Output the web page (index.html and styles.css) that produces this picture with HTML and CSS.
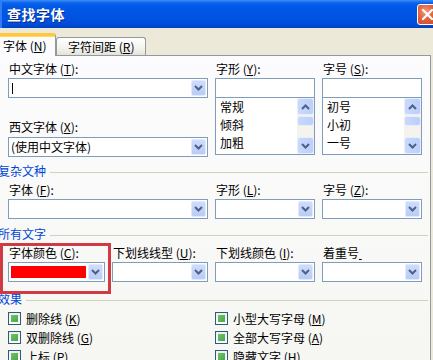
FILE: index.html
```html
<!DOCTYPE html>
<html lang="zh-CN">
<head>
    <meta charset="UTF-8">
    <title>查找字体</title>
    <link rel="stylesheet" href="styles.css">
</head>
<body>
    <div class="dialog">
        <div class="titlebar">
            <span class="title">查找字体</span>
            <span class="close-button">
                <svg width="13" height="13" viewBox="0 0 13 13"><path d="M2 2 L11 11 M11 2 L2 11" stroke="#fff" stroke-width="2.2" stroke-linecap="round"/></svg>
            </span>
        </div>

        <div class="tabbar">
            <div class="tab tab-active">字体 (<u>N</u>)</div>
            <div class="tab">字符间距 (<u>R</u>)</div>
        </div>

        <div class="panel">
            <div class="top-grid">
                <div class="col">
                    <div class="label">中文字体 (<u>T</u>):</div>
                    <div class="combo"><span class="combo-text"><span class="caret"></span></span><span class="drop-button"><svg width="9" height="6" viewBox="0 0 9 6"><polyline points="1,1 4.5,4.5 8,1" fill="none" stroke="#4d6185" stroke-width="2"/></svg></span></div>
                    <div class="label label-spaced">西文字体 (<u>X</u>):</div>
                    <div class="combo"><span class="combo-text">(使用中文字体)</span><span class="drop-button"><svg width="9" height="6" viewBox="0 0 9 6"><polyline points="1,1 4.5,4.5 8,1" fill="none" stroke="#4d6185" stroke-width="2"/></svg></span></div>
                </div>
                <div class="col">
                    <div class="label">字形 (<u>Y</u>):</div>
                    <div class="text-input"></div>
                    <div class="listbox">
                        <div class="list-items">
                            <div>常规</div>
                            <div>倾斜</div>
                            <div>加粗</div>
                        </div>
                        <div class="scrollbar">
                            <span class="scroll-button"><svg width="9" height="6" viewBox="0 0 9 6"><polyline points="1,5 4.5,1.5 8,5" fill="none" stroke="#4d6185" stroke-width="2"/></svg></span>
                            <span class="scroll-track"><span class="scroll-thumb"></span></span>
                            <span class="scroll-button"><svg width="9" height="6" viewBox="0 0 9 6"><polyline points="1,1 4.5,4.5 8,1" fill="none" stroke="#4d6185" stroke-width="2"/></svg></span>
                        </div>
                    </div>
                </div>
                <div class="col">
                    <div class="label">字号 (<u>S</u>):</div>
                    <div class="text-input"></div>
                    <div class="listbox">
                        <div class="list-items">
                            <div>初号</div>
                            <div>小初</div>
                            <div>一号</div>
                        </div>
                        <div class="scrollbar">
                            <span class="scroll-button"><svg width="9" height="6" viewBox="0 0 9 6"><polyline points="1,5 4.5,1.5 8,5" fill="none" stroke="#4d6185" stroke-width="2"/></svg></span>
                            <span class="scroll-track"><span class="scroll-thumb"></span></span>
                            <span class="scroll-button"><svg width="9" height="6" viewBox="0 0 9 6"><polyline points="1,1 4.5,4.5 8,1" fill="none" stroke="#4d6185" stroke-width="2"/></svg></span>
                        </div>
                    </div>
                </div>
            </div>

            <div class="group-header group-complex"><span>复杂文种</span><span class="group-line"></span></div>
            <div class="field-grid">
                <div class="field field-wide">
                    <div class="label">字体 (<u>F</u>):</div>
                    <div class="combo"><span class="combo-text"></span><span class="drop-button"><svg width="9" height="6" viewBox="0 0 9 6"><polyline points="1,1 4.5,4.5 8,1" fill="none" stroke="#4d6185" stroke-width="2"/></svg></span></div>
                </div>
                <div class="field">
                    <div class="label">字形 (<u>L</u>):</div>
                    <div class="combo"><span class="combo-text"></span><span class="drop-button"><svg width="9" height="6" viewBox="0 0 9 6"><polyline points="1,1 4.5,4.5 8,1" fill="none" stroke="#4d6185" stroke-width="2"/></svg></span></div>
                </div>
                <div class="field">
                    <div class="label">字号 (<u>Z</u>):</div>
                    <div class="combo"><span class="combo-text"></span><span class="drop-button"><svg width="9" height="6" viewBox="0 0 9 6"><polyline points="1,1 4.5,4.5 8,1" fill="none" stroke="#4d6185" stroke-width="2"/></svg></span></div>
                </div>
            </div>

            <div class="group-header group-all"><span>所有文字</span><span class="group-line"></span></div>
            <div class="field-grid">
                <div class="field">
                    <div class="label">字体颜色 (<u>C</u>):</div>
                    <div class="combo"><span class="color-swatch"></span><span class="drop-button"><svg width="9" height="6" viewBox="0 0 9 6"><polyline points="1,1 4.5,4.5 8,1" fill="none" stroke="#4d6185" stroke-width="2"/></svg></span></div>
                </div>
                <div class="field">
                    <div class="label">下划线线型 (<u>U</u>):</div>
                    <div class="combo"><span class="combo-text"></span><span class="drop-button"><svg width="9" height="6" viewBox="0 0 9 6"><polyline points="1,1 4.5,4.5 8,1" fill="none" stroke="#4d6185" stroke-width="2"/></svg></span></div>
                </div>
                <div class="field">
                    <div class="label">下划线颜色 (<u>I</u>):</div>
                    <div class="combo"><span class="combo-text"></span><span class="drop-button"><svg width="9" height="6" viewBox="0 0 9 6"><polyline points="1,1 4.5,4.5 8,1" fill="none" stroke="#4d6185" stroke-width="2"/></svg></span></div>
                </div>
                <div class="field">
                    <div class="label">着重号<u>&nbsp;</u></div>
                    <div class="combo"><span class="combo-text"></span><span class="drop-button"><svg width="9" height="6" viewBox="0 0 9 6"><polyline points="1,1 4.5,4.5 8,1" fill="none" stroke="#4d6185" stroke-width="2"/></svg></span></div>
                </div>
            </div>

            <div class="group-header group-effects"><span>效果</span><span class="group-line"></span></div>
            <div class="check-grid">
                <div class="check"><span class="checkbox"></span>删除线 (<u>K</u>)</div>
                <div class="check"><span class="checkbox"></span>小型大写字母 (<u>M</u>)</div>
                <div class="check"><span class="checkbox"></span>双删除线 (<u>G</u>)</div>
                <div class="check"><span class="checkbox"></span>全部大写字母 (<u>A</u>)</div>
                <div class="check"><span class="checkbox"></span>上标 (<u>P</u>)</div>
                <div class="check"><span class="checkbox"></span>隐藏文字 (<u>H</u>)</div>
            </div>

            <!-- red marker drawn over the font colour field -->
            <div class="highlight"></div>
        </div>
    </div>
</body>
</html>
```

FILE: styles.css
```css
body {
    margin: 0;
    overflow: hidden;
    font-family: "Noto Sans CJK SC", "Noto Sans", sans-serif;
    font-size: 12px;
    color: #000;
}

.dialog {
    width: 433px;
    height: 360px;
    overflow: hidden;
    background-color: #ece9d8;
}

/* title bar */
.titlebar {
    height: 28px;
    display: flex;
    align-items: center;
    justify-content: space-between;
    box-sizing: border-box;
    padding-left: 5px;
    border-left: 2px solid #2f7df4;
    background: linear-gradient(#3d8ef8 0, #0a62ec 3px, #0058e6 7px, #0054e3 16px, #004ed9 24px, #003fc0 28px);
}

.title {
    color: #fff;
    font-size: 14px;
    font-weight: bold;
    letter-spacing: 0.5px;
    text-shadow: 1px 1px 0 #0b2a8a;
}

.close-button {
    width: 21px;
    height: 21px;
    box-sizing: border-box;
    margin-right: -5px;
    display: flex;
    align-items: center;
    justify-content: center;
    border: 1px solid #fff;
    border-radius: 3px;
    background: radial-gradient(circle at 40% 35%, #f09a7c 0, #e2633f 45%, #c94420 100%);
}

/* tabs */
.tabbar {
    height: 27px;
    display: flex;
    align-items: flex-end;
    position: relative;
    z-index: 1;
}

.tab {
    height: 18px;
    box-sizing: border-box;
    padding: 0 11px 0 11px;
    line-height: 17px;
    border: 1px solid #919b9c;
    border-bottom: none;
    border-radius: 3px 3px 0 0;
    background: linear-gradient(#ffffff, #f3f3ef 60%, #e3e2da);
}

.tab-active {
    height: 23px;
    width: 58px;
    margin-left: -2px;
    margin-bottom: -1px;
    padding: 0 0 0 4px;
    line-height: 19px;
    border-top: 3px solid #ffc83c;
    box-shadow: inset 0 1px 0 #ffd865;
    background: #fcfcfe;
}

/* tab panel */
.panel {
    position: relative;
    width: 432px;
    height: 310px;
    box-sizing: border-box;
    margin-left: -1px;
    padding: 5px 0 0 1px;
    border: 1px solid #919b9c;
    background: linear-gradient(#fcfcfe, #f6f6f2);
}

.label {
    height: 16px;
    line-height: 16px;
    padding-left: 1px;
    margin-bottom: 1px;
    white-space: nowrap;
}

.label-spaced {
    margin-top: 21px;
    margin-bottom: 2px;
}

.top-grid {
    display: grid;
    grid-template-columns: 200px 100px 100px;
    column-gap: 7px;
    margin-left: 7px;
}

.col {
    display: flex;
    flex-direction: column;
}

.combo {
    height: 20px;
    box-sizing: border-box;
    display: flex;
    padding: 1px;
    border: 1px solid #7f9db9;
    background-color: #fff;
}

.combo-text {
    flex: 1;
    padding-left: 1px;
    line-height: 16px;
    white-space: nowrap;
    display: flex;
    align-items: center;
}

.caret {
    width: 1px;
    height: 11px;
    margin-left: 1px;
    background-color: #000;
}

.drop-button {
    width: 15px;
    box-sizing: border-box;
    display: flex;
    align-items: center;
    justify-content: center;
    border: 1px solid #e1e9fd;
    border-radius: 2px;
    background: linear-gradient(#cfdcfd, #b9cbf7);
}

.text-input {
    height: 20px;
    box-sizing: border-box;
    border: 1px solid #7f9db9;
    background-color: #fff;
}

.listbox {
    height: 58px;
    margin-top: -1px;
    box-sizing: border-box;
    display: flex;
    border: 1px solid #7f9db9;
    background-color: #fff;
}

.list-items {
    flex: 1;
    padding-left: 4px;
}

.list-items div {
    height: 18px;
    line-height: 18px;
}

.scrollbar {
    width: 17px;
    display: flex;
    flex-direction: column;
    background-color: #f4f3ee;
}

.scroll-button {
    height: 17px;
    box-sizing: border-box;
    display: flex;
    align-items: center;
    justify-content: center;
    border: 1px solid #e6edfd;
    border-radius: 3px;
    background: linear-gradient(90deg, #cad8fc, #bccffa);
}

.scroll-track {
    flex: 1;
    padding-top: 1px;
}

.scroll-thumb {
    display: block;
    height: 10px;
    box-sizing: border-box;
    border: 1px solid #e6edfd;
    border-radius: 3px;
    background: linear-gradient(90deg, #cad8fc, #bccffa);
}

/* groups */
.group-header {
    display: flex;
    align-items: center;
    height: 14px;
    line-height: 14px;
    margin-left: -3px;
    margin-right: 2px;
    color: #0046d5;
    white-space: nowrap;
}

.group-line {
    flex: 1;
    height: 1px;
    margin-left: 4px;
    margin-top: 2px;
    background-color: #d0d0bf;
}

.group-complex {
    margin-top: 7px;
}

.group-all {
    margin-top: 8px;
}

.group-effects {
    margin-top: 10px;
}

.field-grid {
    display: grid;
    grid-template-columns: 97px 96px 100px 100px;
    column-gap: 7px;
    margin-left: 7px;
    margin-top: 4px;
}

.field-wide {
    grid-column: span 2;
}

.color-swatch {
    width: 75px;
    margin: 2px 0 2px 1px;
    background-color: #f00;
}

.color-swatch + .drop-button {
    margin-left: auto;
}

/* effects */
.check-grid {
    display: grid;
    grid-template-columns: 207px 1fr;
    margin-left: 7px;
    margin-top: 3px;
}

.check {
    height: 19px;
    display: flex;
    align-items: center;
    white-space: nowrap;
}

.checkbox {
    width: 13px;
    height: 13px;
    box-sizing: border-box;
    margin-right: 5px;
    padding: 2px;
    border: 1px solid #2c5a82;
    background: linear-gradient(#eef0e8, #fbfbf8);
}

.checkbox::after {
    content: "";
    display: block;
    width: 7px;
    height: 7px;
    background: linear-gradient(135deg, #6cc46a, #4ea64c);
}

.highlight {
    position: absolute;
    left: 0;
    top: 187px;
    width: 111px;
    height: 51px;
    box-sizing: border-box;
    border: 3px solid #cf3a45;
}
```
